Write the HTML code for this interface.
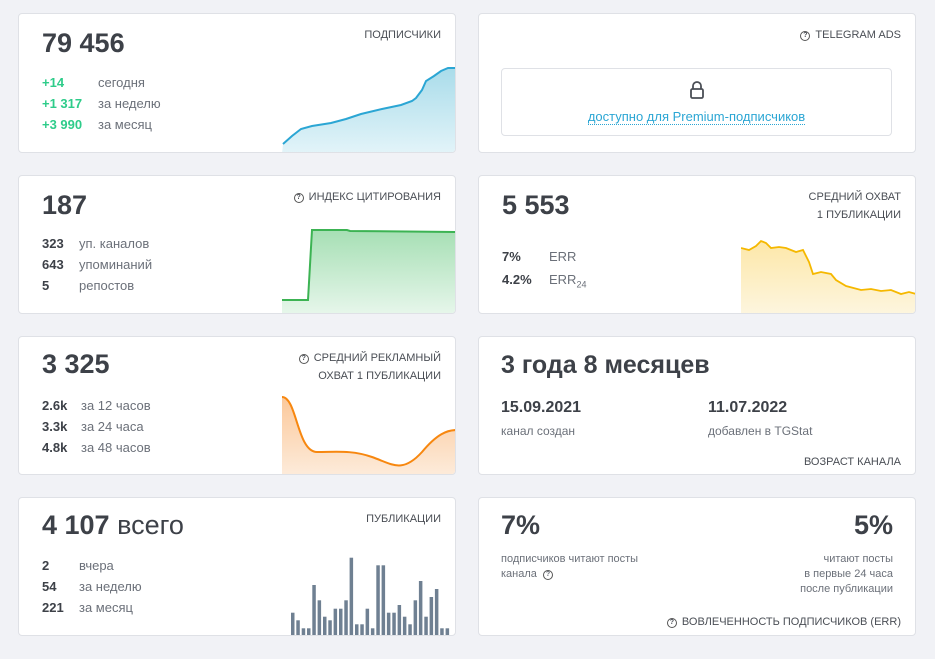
<!DOCTYPE html>
<html><head><meta charset="utf-8"><style>
body{margin:0;width:935px;height:659px;background:#f1f2f6;font-family:"Liberation Sans",sans-serif;position:relative;overflow:hidden;color:#3d4148}
.c{position:absolute;background:#fff;border:1px solid #dfe1e6;border-radius:4px;box-sizing:border-box;overflow:hidden}
.a{position:absolute;white-space:nowrap}
.big{font-size:27px;font-weight:bold;color:#3d4148}
.lab{font-size:11px;color:#4a4e55;text-align:right;line-height:18px}
.s{font-size:13px;color:#3d4148;font-weight:bold}
.t{font-size:13px;color:#6b7079}
.g{color:#2ecc8a}
.q{display:inline-block;width:8px;height:8px;border:1px solid #555;border-radius:50%;font-size:7px;line-height:8px;text-align:center;vertical-align:1px;margin-right:5px;font-weight:bold}
svg{position:absolute}
</style></head><body>
<div class="c" style="left:18px;top:13px;width:438px;height:140px">
<div class="a big" style="left:23px;top:14px">79 456</div>
<div class="a lab" style="right:14px;top:12px">ПОДПИСЧИКИ</div>
<div class="a s g" style="left:23px;top:61px">+14</div><div class="a t" style="left:79px;top:61px">сегодня</div>
<div class="a s g" style="left:23px;top:82px">+1 317</div><div class="a t" style="left:79px;top:82px">за неделю</div>
<div class="a s g" style="left:23px;top:103px">+3 990</div><div class="a t" style="left:79px;top:103px">за месяц</div>
<svg style="left:263px;top:50px" width="175" height="90"><defs><linearGradient id="b" x1="0" y1="0" x2="0" y2="1"><stop offset="0" stop-color="#a9dcea"/><stop offset="1" stop-color="#e3f4f9"/></linearGradient></defs>
<path d="M1 80 L10 72 L19 65 L30 62 L49 59 L64 55 L79 50 L100 45 L119 41 L130 37 L134 34 L140 26 L144 17 L152 12 L159 7 L166 4 L175 4 L175 90 L0 90Z" fill="url(#b)"/>
<path d="M1 80 L10 72 L19 65 L30 62 L49 59 L64 55 L79 50 L100 45 L119 41 L130 37 L134 34 L140 26 L144 17 L152 12 L159 7 L166 4 L175 4" fill="none" stroke="#2ba6d4" stroke-width="2"/></svg>
</div>
<div class="c" style="left:478px;top:13px;width:438px;height:140px">
<div class="a lab" style="right:14px;top:12px"><span class="q">?</span>TELEGRAM ADS</div>
<div class="a" style="left:22px;top:54px;width:391px;height:68px;border:1px solid #dfe1e6;border-radius:4px;box-sizing:border-box">
<svg style="left:187px;top:12px" width="16" height="18"><path d="M4 8V5a4 4 0 0 1 8 0v3" fill="none" stroke="#4a4e55" stroke-width="1.8"/><rect x="2" y="8" width="12" height="9" rx="1.5" fill="none" stroke="#4a4e55" stroke-width="1.8"/></svg>
<div class="a" style="left:0;right:0;top:40px;text-align:center;font-size:13px;color:#2ba6d4"><span style="border-bottom:1px dotted #2ba6d4">доступно для Premium-подписчиков</span></div></div>
</div>
<div class="c" style="left:18px;top:175px;width:438px;height:139px">
<div class="a big" style="left:23px;top:14px">187</div>
<div class="a lab" style="right:14px;top:12px"><span class="q">?</span>ИНДЕКС ЦИТИРОВАНИЯ</div>
<div class="a s" style="left:23px;top:60px">323</div><div class="a t" style="left:60px;top:60px">уп. каналов</div>
<div class="a s" style="left:23px;top:81px">643</div><div class="a t" style="left:60px;top:81px">упоминаний</div>
<div class="a s" style="left:23px;top:102px">5</div><div class="a t" style="left:60px;top:102px">репостов</div>
<svg style="left:263px;top:50px" width="175" height="90"><defs><linearGradient id="gr" x1="0" y1="0" x2="0" y2="1"><stop offset="0" stop-color="#a6dfb4"/><stop offset="1" stop-color="#e8f7ec"/></linearGradient></defs>
<path d="M0 74 L26 74 L30 4 L65 4 L68 5 L175 6 L175 90 L0 90Z" fill="url(#gr)"/>
<path d="M0 74 L26 74 L30 4 L65 4 L68 5 L175 6" fill="none" stroke="#3cb353" stroke-width="2"/></svg>
</div>
<div class="c" style="left:478px;top:175px;width:438px;height:139px">
<div class="a big" style="left:23px;top:14px">5 553</div>
<div class="a lab" style="right:14px;top:12px">СРЕДНИЙ ОХВАТ<br>1 ПУБЛИКАЦИИ</div>
<div class="a s" style="left:23px;top:73px">7%</div><div class="a t" style="left:70px;top:73px">ERR</div>
<div class="a s" style="left:23px;top:96px">4.2%</div><div class="a t" style="left:70px;top:96px">ERR<sub style="font-size:9px">24</sub></div>
<svg style="left:262px;top:60px" width="176" height="80"><defs><linearGradient id="y" x1="0" y1="0" x2="0" y2="1"><stop offset="0" stop-color="#fde7a8"/><stop offset="1" stop-color="#fdf6e0"/></linearGradient></defs>
<path d="M0 12 L8 14 L15 10 L20 5 L25 7 L30 12 L38 11 L45 12 L55 16 L62 14 L68 26 L72 38 L80 36 L90 38 L95 44 L105 50 L120 54 L130 53 L140 55 L150 54 L160 58 L168 56 L175 58 L175 80 L0 80Z" fill="url(#y)"/>
<path d="M0 12 L8 14 L15 10 L20 5 L25 7 L30 12 L38 11 L45 12 L55 16 L62 14 L68 26 L72 38 L80 36 L90 38 L95 44 L105 50 L120 54 L130 53 L140 55 L150 54 L160 58 L168 56 L175 58" fill="none" stroke="#f5b800" stroke-width="1.8"/></svg>
</div>
<div class="c" style="left:18px;top:336px;width:438px;height:139px">
<div class="a big" style="left:23px;top:12px">3 325</div>
<div class="a lab" style="right:14px;top:12px"><span class="q">?</span>СРЕДНИЙ РЕКЛАМНЫЙ<br>ОХВАТ 1 ПУБЛИКАЦИИ</div>
<div class="a s" style="left:23px;top:61px">2.6k</div><div class="a t" style="left:62px;top:61px">за 12 часов</div>
<div class="a s" style="left:23px;top:82px">3.3k</div><div class="a t" style="left:62px;top:82px">за 24 часа</div>
<div class="a s" style="left:23px;top:103px">4.8k</div><div class="a t" style="left:62px;top:103px">за 48 часов</div>
<svg style="left:263px;top:55px" width="175" height="85"><defs><linearGradient id="o" x1="0" y1="0" x2="0" y2="1"><stop offset="0" stop-color="#fbc89a"/><stop offset="1" stop-color="#fdecdc"/></linearGradient></defs>
<path d="M0 5 C15 5 15 60 35 60 C55 60 70 58 90 65 C110 72 120 82 140 60 C155 42 165 38 175 38 L175 85 L0 85Z" fill="url(#o)"/>
<path d="M0 5 C15 5 15 60 35 60 C55 60 70 58 90 65 C110 72 120 82 140 60 C155 42 165 38 175 38" fill="none" stroke="#f7870f" stroke-width="2"/></svg>
</div>
<div class="c" style="left:478px;top:336px;width:438px;height:139px">
<div class="a" style="left:22px;top:14px;font-size:25px;font-weight:bold">3 года 8 месяцев</div>
<div class="a" style="left:22px;top:62px;font-size:16px;font-weight:bold">15.09.2021</div>
<div class="a t" style="left:22px;top:87px;font-size:12px">канал создан</div>
<div class="a" style="left:229px;top:62px;font-size:16px;font-weight:bold">11.07.2022</div>
<div class="a t" style="left:229px;top:87px;font-size:12px">добавлен в TGStat</div>
<div class="a lab" style="right:14px;top:116px">ВОЗРАСТ КАНАЛА</div>
</div>
<div class="c" style="left:18px;top:497px;width:438px;height:139px">
<div class="a big" style="left:23px;top:12px">4 107 <span style="font-weight:normal">всего</span></div>
<div class="a lab" style="right:14px;top:12px">ПУБЛИКАЦИИ</div>
<div class="a s" style="left:23px;top:60px">2</div><div class="a t" style="left:60px;top:60px">вчера</div>
<div class="a s" style="left:23px;top:81px">54</div><div class="a t" style="left:60px;top:81px">за неделю</div>
<div class="a s" style="left:23px;top:102px">221</div><div class="a t" style="left:60px;top:102px">за месяц</div>
<svg style="left:0;top:0" width="438" height="139" id="bars"></svg>
</div>
<div class="c" style="left:478px;top:497px;width:438px;height:139px">
<div class="a big" style="left:22px;top:12px">7%</div>
<div class="a big" style="right:22px;top:12px">5%</div>
<div class="a t" style="left:22px;top:54px;font-size:11px;line-height:15px">подписчиков читают посты<br>канала <span class="q" style="margin-left:3px">?</span></div>
<div class="a t" style="right:22px;top:54px;font-size:11px;line-height:15px;text-align:right">читают посты<br>в первые 24 часа<br>после публикации</div>
<div class="a lab" style="right:14px;top:115px"><span class="q">?</span>ВОВЛЕЧЕННОСТЬ ПОДПИСЧИКОВ (ERR)</div>
</div>
<script>
var t=[335,358,382,382,252,298,347,358,323,323,298,170,370,370,323,382,193,193,335,335,312,347,370,298,240,347,288,264,382,382],s='';
for(var i=0;i<t.length;i++){var x=290+5.33*i-18,y=500+t[i]/3-497;s+='<rect x="'+x.toFixed(1)+'" y="'+y.toFixed(1)+'" width="3.5" height="'+(139-y).toFixed(1)+'" fill="#6f8092"/>';}
document.getElementById('bars').innerHTML=s;
</script>
</body></html>
